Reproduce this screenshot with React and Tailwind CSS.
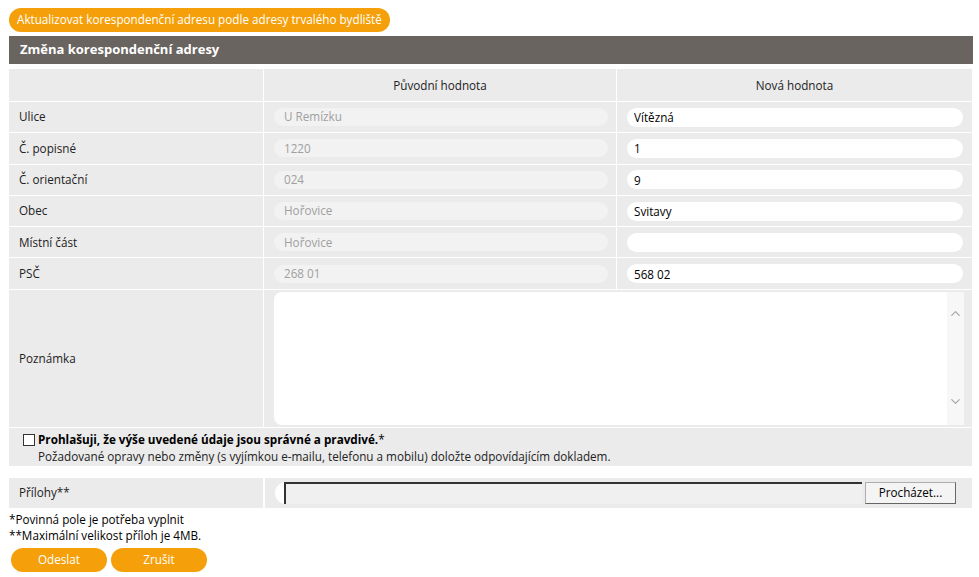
import { ChevronUp, ChevronDown } from 'lucide-react';

const rows = [
  { label: 'Ulice', orig: 'U Remízku', value: 'Vítězná' },
  { label: 'Č. popisné', orig: '1220', value: '1' },
  { label: 'Č. orientační', orig: '024', value: '9' },
  { label: 'Obec', orig: 'Hořovice', value: 'Svitavy' },
  { label: 'Místní část', orig: 'Hořovice', value: '' },
  { label: 'PSČ', orig: '268 01', value: '568 02' },
];

function Row({ label, orig, value }) {
  return (
    <div className="flex h-[31.3px] border-t border-white">
      <div className="w-[254px] flex items-center pl-[10px] bg-[#ebebeb]">{label}</div>
      <div className="w-[352px] ml-px flex items-center pl-[10px] pr-[8px] bg-[#ebebeb]">
        <div className="w-full h-[18px] rounded-full bg-[#f2f2f2] text-[#a0a0a0] flex items-center px-[10px]">
          {orig}
        </div>
      </div>
      <div className="flex-1 ml-px flex items-center pl-[10px] pr-[9px] bg-[#ebebeb]">
        <input
          className="w-full h-[19px] rounded-full bg-white text-black px-[7px] outline-none"
          defaultValue={value}
        />
      </div>
    </div>
  );
}

export default function App() {
  return (
    <div
      className="bg-white w-[979px] h-[577px] overflow-hidden pt-[8px] pl-[9px] text-[11.7px] text-[#222]"
      style={{ fontFamily: '"Open Sans", "Noto Sans", sans-serif' }}
    >
      <button className="h-[24px] px-[8px] rounded-full bg-[#f5a00a] text-white text-[11.7px] leading-none">
        Aktualizovat korespondenční adresu podle adresy trvalého bydliště
      </button>

      <div className="mt-[4px] w-[964px] h-[28px] bg-[#6a6461] text-white font-bold text-[13px] flex items-center pl-[11px]">
        Změna korespondenční adresy
      </div>

      <div className="mt-[5px] w-[963px]">
        <div className="flex h-[32px]">
          <div className="w-[254px] bg-[#ebebeb]"></div>
          <div className="w-[352px] ml-px bg-[#ebebeb] flex items-center justify-center pt-[2px]">
            Původní hodnota
          </div>
          <div className="flex-1 ml-px bg-[#ebebeb] flex items-center justify-center pt-[2px]">
            Nová hodnota
          </div>
        </div>

        {rows.map((r) => (
          <Row key={r.label} {...r} />
        ))}

        <div className="flex h-[138px] border-t border-white">
          <div className="w-[254px] flex items-center pl-[10px] bg-[#ebebeb]">Poznámka</div>
          <div className="flex-1 ml-px bg-[#ebebeb] pl-[10px] pr-[8px] py-[2px] flex">
            <div className="flex-1 bg-white rounded-[8px] flex justify-end">
              <div className="w-[17px] bg-[#f7f7f7] flex flex-col items-center justify-between pt-[14px] pb-[16px] text-[#a8a8a8]">
                <ChevronUp size={15} strokeWidth={2} />
                <ChevronDown size={15} strokeWidth={2} />
              </div>
            </div>
          </div>
        </div>

        <div className="mt-px h-[38px] bg-[#ebebeb] pl-[14px] pt-[3px]">
          <label className="flex items-center">
            <span className="w-[12px] h-[12px] border border-[#333] bg-white mr-[3px]"></span>
            <span className="font-bold text-black">Prohlašuji, že výše uvedené údaje jsou správné a pravdivé.</span>
            <span className="text-black">*</span>
          </label>
          <div className="pl-[15px] leading-[16px]">
            Požadované opravy nebo změny (s vyjímkou e-mailu, telefonu a mobilu) doložte odpovídajícím dokladem.
          </div>
        </div>

        <div className="mt-[12px] flex h-[30px]">
          <div className="w-[254px] flex items-center pl-[10px] bg-[#ebebeb]">Přílohy**</div>
          <div className="flex-1 ml-[2px] bg-[#ebebeb] flex items-center pl-[10px] pr-[16px]">
            <div className="w-[16px] h-[22px] bg-white rounded-l-full"></div>
            <div className="flex-1 h-[22px] bg-[#f0f0f0] border-t-2 border-l-2 border-[#333] -ml-[7px]"></div>
            <button className="ml-[3px] w-[91px] h-[22px] bg-[#f4f4f4] border border-[#adadad] border-r-[#666] border-b-[#666] text-black">
              Procházet...
            </button>
          </div>
        </div>
      </div>

      <div className="mt-[3px] leading-[16px] text-black">
        <div>*Povinná pole je potřeba vyplnit</div>
        <div>**Maximální velikost příloh je 4MB.</div>
      </div>

      <div className="mt-[5px] flex gap-[4px] pl-[2px]">
        <button className="w-[96px] h-[24px] rounded-full bg-[#f5a00a] text-white">Odeslat</button>
        <button className="w-[96px] h-[24px] rounded-full bg-[#f5a00a] text-white">Zrušit</button>
      </div>
    </div>
  );
}
